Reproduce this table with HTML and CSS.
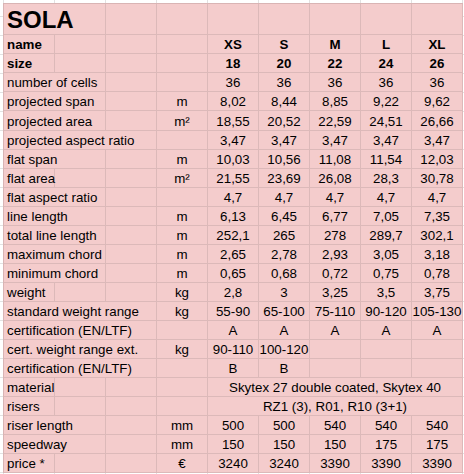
FILE: index.html
```html
<!DOCTYPE html>
<html>
<head>
<meta charset="utf-8">
<link rel="stylesheet" href="styles.css">
</head>
<body>
<div class="sheet">
  <div class="c title s2">SOLA</div><div class="c"></div><div class="c"></div><div class="c"></div><div class="c"></div><div class="c"></div><div class="c"></div><div class="c"></div>

  <div class="c b">name</div><div class="c"></div><div class="c"></div><div class="c"></div><div class="c n b">XS</div><div class="c n b">S</div><div class="c n b">M</div><div class="c n b">L</div><div class="c n b">XL</div>

  <div class="c b">size</div><div class="c"></div><div class="c"></div><div class="c"></div><div class="c n b">18</div><div class="c n b">20</div><div class="c n b">22</div><div class="c n b">24</div><div class="c n b">26</div>

  <div class="c s2">number of cells</div><div class="c"></div><div class="c"></div><div class="c n">36</div><div class="c n">36</div><div class="c n">36</div><div class="c n">36</div><div class="c n">36</div>

  <div class="c s2">projected span</div><div class="c"></div><div class="c n">m</div><div class="c n">8,02</div><div class="c n">8,44</div><div class="c n">8,85</div><div class="c n">9,22</div><div class="c n">9,62</div>

  <div class="c s2">projected area</div><div class="c"></div><div class="c n">m²</div><div class="c n">18,55</div><div class="c n">20,52</div><div class="c n">22,59</div><div class="c n">24,51</div><div class="c n">26,66</div>

  <div class="c s3">projected aspect ratio</div><div class="c"></div><div class="c n">3,47</div><div class="c n">3,47</div><div class="c n">3,47</div><div class="c n">3,47</div><div class="c n">3,47</div>

  <div class="c s2">flat span</div><div class="c"></div><div class="c n">m</div><div class="c n">10,03</div><div class="c n">10,56</div><div class="c n">11,08</div><div class="c n">11,54</div><div class="c n">12,03</div>

  <div class="c">flat area</div><div class="c"></div><div class="c"></div><div class="c n">m²</div><div class="c n">21,55</div><div class="c n">23,69</div><div class="c n">26,08</div><div class="c n">28,3</div><div class="c n">30,78</div>

  <div class="c s2">flat aspect ratio</div><div class="c"></div><div class="c"></div><div class="c n">4,7</div><div class="c n">4,7</div><div class="c n">4,7</div><div class="c n">4,7</div><div class="c n">4,7</div>

  <div class="c s2">line length</div><div class="c"></div><div class="c n">m</div><div class="c n">6,13</div><div class="c n">6,45</div><div class="c n">6,77</div><div class="c n">7,05</div><div class="c n">7,35</div>

  <div class="c s2">total line length</div><div class="c"></div><div class="c n">m</div><div class="c n">252,1</div><div class="c n">265</div><div class="c n">278</div><div class="c n">289,7</div><div class="c n">302,1</div>

  <div class="c s2">maximum chord</div><div class="c"></div><div class="c n">m</div><div class="c n">2,65</div><div class="c n">2,78</div><div class="c n">2,93</div><div class="c n">3,05</div><div class="c n">3,18</div>

  <div class="c s2">minimum chord</div><div class="c"></div><div class="c n">m</div><div class="c n">0,65</div><div class="c n">0,68</div><div class="c n">0,72</div><div class="c n">0,75</div><div class="c n">0,78</div>

  <div class="c">weight</div><div class="c"></div><div class="c"></div><div class="c n">kg</div><div class="c n">2,8</div><div class="c n">3</div><div class="c n">3,25</div><div class="c n">3,5</div><div class="c n">3,75</div>

  <div class="c s3">standard weight range</div><div class="c n">kg</div><div class="c n">55-90</div><div class="c n">65-100</div><div class="c n">75-110</div><div class="c n">90-120</div><div class="c n">105-130</div>

  <div class="c s3">certification (EN/LTF)</div><div class="c"></div><div class="c n">A</div><div class="c n">A</div><div class="c n">A</div><div class="c n">A</div><div class="c n">A</div>

  <div class="c s3">cert. weight range ext.</div><div class="c n">kg</div><div class="c n">90-110</div><div class="c n">100-120</div><div class="c"></div><div class="c"></div><div class="c"></div>

  <div class="c s3">certification (EN/LTF)</div><div class="c"></div><div class="c n">B</div><div class="c n">B</div><div class="c"></div><div class="c"></div><div class="c"></div>

  <div class="c">material</div><div class="c"></div><div class="c"></div><div class="c"></div><div class="c n s5">Skytex 27 double coated, Skytex 40</div>

  <div class="c">risers</div><div class="c"></div><div class="c"></div><div class="c"></div><div class="c n s5">RZ1 (3), R01, R10 (3+1)</div>

  <div class="c s2">riser length</div><div class="c"></div><div class="c n">mm</div><div class="c n">500</div><div class="c n">500</div><div class="c n">540</div><div class="c n">540</div><div class="c n">540</div>

  <div class="c s2">speedway</div><div class="c"></div><div class="c n">mm</div><div class="c n">150</div><div class="c n">150</div><div class="c n">150</div><div class="c n">175</div><div class="c n">175</div>

  <div class="c">price *</div><div class="c"></div><div class="c"></div><div class="c n">€</div><div class="c n">3240</div><div class="c n">3240</div><div class="c n">3390</div><div class="c n">3390</div><div class="c n">3390</div>
</div>
</body>
</html>
```

FILE: styles.css
```css
html, body {
  margin: 0;
  padding: 0;
}

body {
  padding: 3px 0 0 3px;
  background-color: #ffffff;
  background-image:
    linear-gradient(to right, #e2e2e2 1px, transparent 1px),
    linear-gradient(to bottom, #e2e2e2 1px, transparent 1px);
  background-size: 51px 100%, 100% 19px;
  background-position: 3px 0, 0 16px;
  font-family: "Liberation Sans", Arial, sans-serif;
  font-size: 13.333px;
  color: #000000;
  height: 474px;
  box-sizing: border-box;
}

.sheet {
  display: grid;
  grid-template-columns: repeat(9, 51px);
  grid-template-rows: 31px 19px 19px 19px 19px 20px;
  grid-auto-rows: 19px;
  width: max-content;
  background: #f4cccc;
  border-top: 1px solid #d9b4b4;
  border-left: 1px solid #d9b4b4;
}

.c {
  box-sizing: border-box;
  border-right: 1px solid #dcb9b9;
  border-bottom: 1px solid #dcb9b9;
  display: flex;
  align-items: flex-end;
  padding: 0 3px 1px 3px;
  line-height: 15px;
  white-space: nowrap;
  overflow: visible;
  min-width: 0;
}

.n {
  justify-content: center;
  padding: 0 0 1px 0;
}

.b {
  font-weight: bold;
}

.title {
  font-size: 24px;
  font-weight: bold;
  line-height: 27px;
}

.s2 {
  grid-column: span 2;
}

.s3 {
  grid-column: span 3;
}

.s5 {
  grid-column: span 5;
}
```
